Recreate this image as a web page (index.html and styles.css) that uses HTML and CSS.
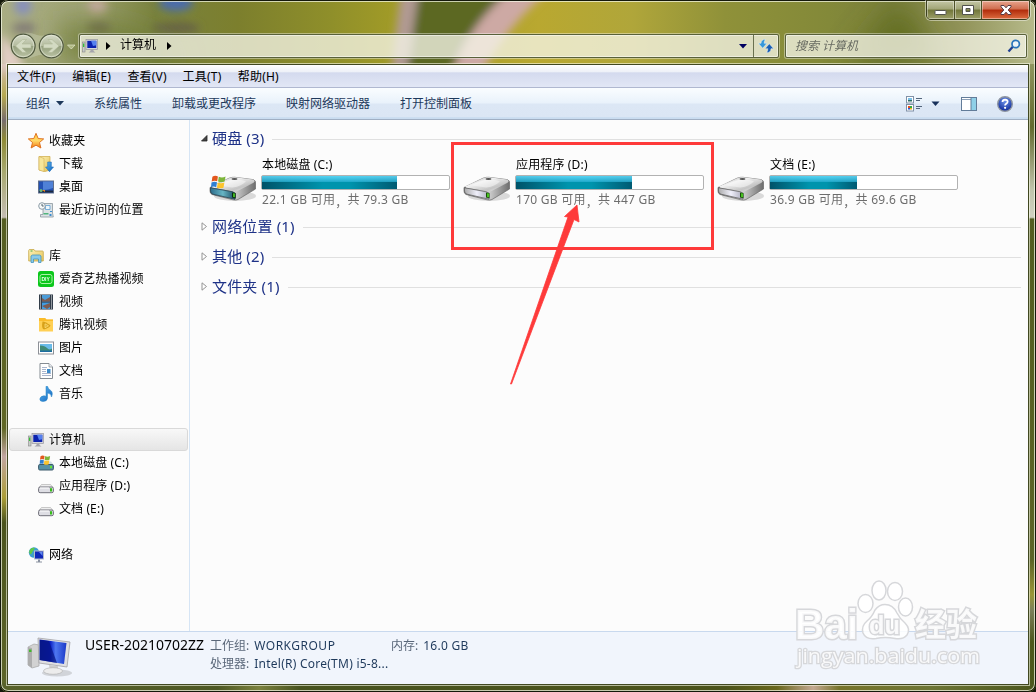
FILE: index.html
```html
<!DOCTYPE html>
<html lang="zh-CN">
<head>
<meta charset="utf-8">
<title>计算机</title>
<link rel="stylesheet" href="styles.css">
</head>
<body>
<svg class="defs" width="0" height="0">
  <defs>
    <linearGradient id="gMetal" x1="0" y1="0" x2="1" y2="1"><stop offset="0" stop-color="#9b9b9b"/><stop offset=".35" stop-color="#f2f2f2"/><stop offset=".7" stop-color="#c4c4c4"/><stop offset="1" stop-color="#f5f5f5"/></linearGradient>
    <linearGradient id="gSide" x1="0" y1="0" x2="1" y2="0"><stop offset="0" stop-color="#666"/><stop offset=".5" stop-color="#d9d9d9"/><stop offset="1" stop-color="#6d6d6d"/></linearGradient>
    <linearGradient id="gFront" x1="0" y1="0" x2="1" y2="0"><stop offset="0" stop-color="#aaa"/><stop offset=".5" stop-color="#efeffa"/><stop offset="1" stop-color="#aab"/></linearGradient>
    <linearGradient id="gTeal" x1="0" y1="0" x2="1" y2="0"><stop offset="0" stop-color="#2c6d8c"/><stop offset=".5" stop-color="#67b5c4"/><stop offset="1" stop-color="#1b4a63"/></linearGradient>
    <linearGradient id="gScreen" x1="0" y1="0" x2="1" y2="0"><stop offset="0" stop-color="#0a1e9c"/><stop offset=".4" stop-color="#0b20c4"/><stop offset=".6" stop-color="#4f78f0"/><stop offset="1" stop-color="#1a38c8"/></linearGradient>
    <linearGradient id="gStar" x1="0" y1="0" x2="0" y2="1"><stop offset="0" stop-color="#ffc53a"/><stop offset=".5" stop-color="#ffd968"/><stop offset="1" stop-color="#f27a14"/></linearGradient>
    <linearGradient id="gFolder" x1="0" y1="0" x2="1" y2="1"><stop offset="0" stop-color="#fdf3b8"/><stop offset="1" stop-color="#e5c257"/></linearGradient>
    <linearGradient id="gBlue" x1="0" y1="0" x2="1" y2="1"><stop offset="0" stop-color="#5fb8f2"/><stop offset="1" stop-color="#0f63bd"/></linearGradient>
    <linearGradient id="gNav" x1="0" y1="0" x2="0" y2="1"><stop offset="0" stop-color="#d5dac8"/><stop offset=".48" stop-color="#b4bc9f"/><stop offset=".52" stop-color="#95a07e"/><stop offset="1" stop-color="#bcc4a5"/></linearGradient>
    <radialGradient id="gHelp" cx=".5" cy=".3" r=".7"><stop offset="0" stop-color="#6f95ea"/><stop offset="1" stop-color="#0b2796"/></radialGradient>
    <symbol id="flag" viewBox="0 0 16 16">
      <path d="M1.5 2.5Q4 .6 7.4 2L6.6 7.2Q3.6 6 .7 7.5z" fill="#e2581e"/>
      <path d="M8.3 2.3Q11.500 4 15.500 2.200L14.500 7.500Q11 9.200 7.500 7.500z" fill="#7db53a"/>
      <path d="M.5 8.500Q3.500 7 6.400 8.200L5.500 13.500Q2.800 12.300 0 13.600z" fill="#2f7fd2"/>
      <path d="M7.300 8.500Q10.500 10 14.300 8.500L13.300 14Q10 15.500 6.300 14z" fill="#fcc42c"/>
    </symbol>
    <symbol id="drive" viewBox="0 0 48 32">
      <ellipse cx="26" cy="24" rx="21" ry="5" fill="#888" opacity=".3"/>
      <path d="M1 15.500L20 6.200Q23 5 26 5.300L44 7.600Q47 8.500 46.500 11V17L29 27.500Q27 28.500 24 27.800L3 22.500Q1 21.500 1 19z" fill="url(#gSide)" stroke="#696969" stroke-width=".7"/>
      <path d="M2 14.500L20 6.200Q23 5 26 5.300L44 7.600Q47 9 44.500 10.800L29 18.700Q27 19.700 23 18.800L3.500 15.900z" fill="url(#gMetal)"/>
      <path d="M9 13.500Q14 9 24 7.500Q34 7.500 37 9.500Q31 15 23 15.500z" fill="#f7f7f7" opacity=".55"/>
      <ellipse cx="25.500" cy="7" rx="3" ry=".9" fill="#555"/>
      <path d="M1.500 15.800L23.500 19.800Q26.500 20.500 26 23V27.200L4 22.200Q1.500 21.500 1.500 19z" fill="url(#gFront)" stroke="#666" stroke-width=".8"/>
      <path d="M23 20.500L26.500 21V26.200L23 25.400z" fill="#174f08"/><path d="M24.300 21.200L25.700 21.500V25.300L24.300 25z" fill="#5df22d"/>
    </symbol>
    <symbol id="sysdrive" viewBox="0 0 48 32">
      <use href="#drive" width="48" height="32"/>
      <path d="M1.500 15.800L23.500 19.800Q26.500 20.500 26 23V27.200L4 22.200Q1.500 21.500 1.500 19z" fill="url(#gTeal)" stroke="#2c4a59" stroke-width=".8"/>
      <path d="M23 20.500L26.500 21V26.200L23 25.400z" fill="#0a2d10"/><path d="M24.300 21.200L25.700 21.500V25.300L24.300 25z" fill="#5df22d"/>
      <use href="#flag" x="1.500" y="2.500" width="16" height="15"/>
    </symbol>
    <symbol id="minidrive" viewBox="0 0 16 16">
      <path d="M1 8.500L3.500 5.500H12.500L15 8.500z" fill="#eee" stroke="#aaa" stroke-width=".6"/>
      <rect x=".6" y="8" width="14.800" height="5.700" rx="1.500" fill="#dedee4" stroke="#71717b"/>
      <rect x="12" y="9.200" width="2.100" height="3.300" fill="#36bd19"/><path d="M2 9h9" stroke="#fff"/>
    </symbol>
    <symbol id="pc" viewBox="0 0 16 16">
      <rect x=".5" y="4" width="2.500" height="10" fill="#c7ccc9" stroke="#888" stroke-width=".6"/><rect x="1" y="5.500" width="1.300" height="3.500" fill="#35bd35"/>
      <rect x="4" y="1.500" width="11.500" height="10" fill="#d6d6db" stroke="#96969d" stroke-width=".7"/>
      <rect x="5.300" y="2.800" width="9" height="7.200" fill="#0b22ae"/><path d="M9 2.800h5.300v4.500L11 8z" fill="#5681ef"/>
      <path d="M8.500 11.500h3V13l2 1.500H6.500l2-1.500z" fill="#a5a5ad"/>
    </symbol>
  </defs>
</svg>

<div class="window">
  <svg class="glass" width="1036" height="692" viewBox="0 0 1036 692">
    <defs>
      <linearGradient id="wall" x1="0" y1="0" x2="1" y2="0">
        <stop offset="0" stop-color="#a9ad83"/><stop offset=".08" stop-color="#a1a577"/><stop offset=".15" stop-color="#79823e"/><stop offset=".23" stop-color="#7c7f2d"/><stop offset=".32" stop-color="#8f8f2a"/><stop offset=".38" stop-color="#a19b27"/><stop offset=".52" stop-color="#b9a830"/><stop offset=".61" stop-color="#b0a63a"/><stop offset=".7" stop-color="#8f9139"/><stop offset=".8" stop-color="#838939"/><stop offset=".86" stop-color="#7a803d"/><stop offset=".93" stop-color="#92945a"/><stop offset="1" stop-color="#b7bb8c"/>
      </linearGradient>
      <linearGradient id="sideL" x1="0" y1="0" x2="0" y2="1"><stop offset="0" stop-color="#d3bcb2"/><stop offset=".05" stop-color="#b6aa50"/><stop offset=".09" stop-color="#776d6c"/><stop offset=".12" stop-color="#8e8a35"/><stop offset=".17" stop-color="#a6a86d"/><stop offset=".244" stop-color="#c4bdb2"/><stop offset=".247" stop-color="#555e22"/><stop offset=".58" stop-color="#606725"/><stop offset=".625" stop-color="#c2a6a0"/><stop offset=".69" stop-color="#ab9e37"/><stop offset=".73" stop-color="#4b541d"/><stop offset="1" stop-color="#5e662a"/></linearGradient>
      <linearGradient id="sideR" x1="0" y1="0" x2="0" y2="1"><stop offset="0" stop-color="#8f965f"/><stop offset=".1" stop-color="#626a2d"/><stop offset=".2" stop-color="#c0c4ab"/><stop offset=".244" stop-color="#d0d2c1"/><stop offset=".247" stop-color="#525d20"/><stop offset=".79" stop-color="#5c6426"/><stop offset=".845" stop-color="#9a9637"/><stop offset=".87" stop-color="#7c7f5a"/><stop offset=".92" stop-color="#4c581c"/><stop offset="1" stop-color="#4c581c"/></linearGradient>
      <linearGradient id="foot" x1="0" y1="0" x2="1" y2="0"><stop offset="0" stop-color="#59622b"/><stop offset=".21" stop-color="#4e5824"/><stop offset=".25" stop-color="#7b813e"/><stop offset=".29" stop-color="#48531f"/><stop offset=".7" stop-color="#4c531b"/><stop offset=".75" stop-color="#69671c"/><stop offset=".785" stop-color="#c3a891"/><stop offset=".81" stop-color="#77742b"/><stop offset=".9" stop-color="#6d7535"/><stop offset="1" stop-color="#4b561d"/></linearGradient>
      <filter id="soft" x="-20%" y="-20%" width="140%" height="140%"><feGaussianBlur stdDeviation="4"/></filter>
      <filter id="soft2" x="-50%" y="-50%" width="200%" height="200%"><feGaussianBlur stdDeviation="14"/></filter>
    </defs>
    <rect width="1036" height="66" fill="url(#wall)"/>
    <rect y="64" width="9" height="628" fill="url(#sideL)"/>
    <rect x="1027" y="64" width="9" height="628" fill="url(#sideR)"/>
    <rect y="683" width="1036" height="9" fill="url(#foot)"/>
    <g filter="url(#soft)">
      <path d="M417-10H512L448 72H402z" fill="#5b6820"/>
      <path d="M401-10H419L407 72H391z" fill="#b19a93"/>
      <path d="M512-10H550Q512 20 482 72H452Q472 20 512-10z" fill="#cda9a4"/>
      <ellipse cx="23" cy="6" rx="9" ry="9" fill="#8790bc"/><ellipse cx="97" cy="6" rx="10" ry="8" fill="#c5aca0"/><ellipse cx="176" cy="3" rx="17" ry="8" fill="#496cae"/>
      <ellipse cx="24" cy="28" rx="12" ry="5" fill="#7e7776"/><ellipse cx="99" cy="28" rx="12" ry="5" fill="#75695d"/><ellipse cx="176" cy="28" rx="24" ry="5" fill="#66604a"/>
      <path d="M0 33Q22 55 24 70H0z" fill="#e1cdc4"/>
    </g>
    <g filter="url(#soft2)"><path d="M900 0L850 60H940z" fill="#646e24"/><path d="M60 20Q160 20 180 65H60z" fill="#69762d" opacity=".7"/></g>
  </svg>

  <div class="caption">
    <div class="caption-buttons">
      <span class="cap min"><svg width="14" height="8" viewBox="0 0 14 8"><rect x="1" y="2.500" width="11" height="4" rx=".8" fill="#fff" stroke="#52534d"/></svg></span>
      <span class="cap max"><svg width="14" height="12" viewBox="0 0 14 12"><path fill-rule="evenodd" d="M1.500 1.500h11v9h-11zM5 4.500v3h4v-3z" fill="#fff" stroke="#52534d"/></svg></span>
      <span class="cap close"><svg width="14" height="12" viewBox="0 0 14 12"><path d="M2 1.500h3l2 2.300 2-2.300h3v1.300L9.200 6l2.800 3.200v1.300H9L7 8.200 5 10.500H2V9.200L4.800 6 2 2.800z" fill="#fff" stroke="#553c45"/></svg></span>
    </div>
  </div>

  <div class="navbar">
    <svg class="navbuttons" width="68" height="30" viewBox="0 0 68 30">
      <path d="M14 2Q21 1 28 4Q34 6 40 2.500Q55 0 55 15Q53 30 41 28Q34 22 27 25Q14 31 2 22Q-2 7 14 2z" fill="#c8ceb3" opacity=".45"/>
      <g stroke="#4f583e" stroke-width="1.200" fill="url(#gNav)"><circle cx="14.200" cy="15" r="11.900"/><circle cx="42.300" cy="15" r="11.900"/></g>
      <g fill="none" stroke="#edf0e2" opacity=".6"><circle cx="14.200" cy="15" r="10.700"/><circle cx="42.300" cy="15" r="10.700"/></g>
      <path d="M6.500 15l7-6.500h4l-4.500 4.500h9v4h-9l4.500 4.500h-4z" fill="#d3dac2" stroke="#b0b898" stroke-width=".6"/>
      <path d="M50 15l-7-6.500h-4L43.500 13h-9v4h9L39 21.500h4z" fill="#d3dac2" stroke="#b0b898" stroke-width=".6"/>
      <path d="M58.500 14h7.500l-3.700 4z" fill="#aeb780" stroke="#e2e7cc" stroke-width=".7"/>
    </svg>
    <div class="address">
      <svg class="i16" viewBox="0 0 16 16"><use href="#pc"/></svg>
      <svg class="crumb" width="5" height="8" viewBox="0 0 5 8"><path d="M0 0l4.500 4L0 8z"/></svg>
      <span class="place">计算机</span>
      <svg class="crumb last" width="5" height="8" viewBox="0 0 5 8"><path d="M0 0l4.500 4L0 8z"/></svg>
      <svg class="drop" width="8" height="5" viewBox="0 0 8 5"><path d="M0 0h8L4 4.500z" fill="#000060"/></svg>
      <span class="refresh"><svg width="16" height="14" viewBox="0 0 16 14"><path d="M7.500.3Q3 .3 3 4.300H.3L4.700 9.300 9 4.300H6.200Q6.200 2 7.500.3z" fill="#3698da" stroke="#f2f7f7" stroke-width=".5"/><path d="M8.500 13.700Q13 13.700 13 9.700h2.700L11.300 4.700 7 9.700h2.800Q9.800 12 8.500 13.700z" fill="#1a5fb4" stroke="#f2f7f7" stroke-width=".5"/></svg></span>
    </div>
    <div class="search"><span class="hint">搜索 计算机</span>
      <svg width="14" height="14" viewBox="0 0 14 14"><path d="M1.500 12.500L5.800 7.800" stroke="#203f91" stroke-width="2.300"/><circle cx="8.700" cy="5" r="3.700" fill="#edf4f7" stroke="#2874ba" stroke-width="1.700"/></svg>
    </div>
  </div>

  <div class="client">
    <div class="menubar"><span>文件(F)</span><span>编辑(E)</span><span>查看(V)</span><span>工具(T)</span><span>帮助(H)</span></div>
    <div class="toolbar">
      <span class="org">组织<svg width="8" height="5" viewBox="0 0 8 5"><path d="M0 0h8L4 4.500z" fill="#1e395b"/></svg></span><span>系统属性</span><span>卸载或更改程序</span><span>映射网络驱动器</span><span>打开控制面板</span>
      <div class="tools">
        <svg width="34" height="16" viewBox="0 0 34 16"><g fill="#fff" stroke="#8192a8"><rect x=".5" y=".5" width="7" height="6.500"/><rect x=".5" y="8.500" width="7" height="6.500"/></g><path d="M2 2h4v2H2z" fill="#7bc0e6"/><path d="M2 4h4v1.500H2z" fill="#2b6c67"/><path d="M2 10h2v2H2z" fill="#e64c1c"/><path d="M4 10h2v2H4z" fill="#36a840"/><path d="M2 12h2v1.500H2z" fill="#2458d3"/><path d="M4 12h2v1.500H4z" fill="#efb221"/><path d="M10 2.500h6M10 4.500h4M10 10.500h6M10 12.500h4" stroke="#53667c"/><path d="M25.500 5.500h8l-4 4.500z" fill="#17305a"/></svg>
        <svg class="pane" width="16" height="14" viewBox="0 0 16 14"><rect x=".5" y=".5" width="15" height="13" fill="#fff" stroke="#627c99"/><rect x="10" y="1" width="5" height="12" fill="#8fd0e8"/><path d="M1 2.500h9" stroke="#8ba0b8"/><path d="M10 1v12" stroke="#627c99"/></svg>
        <svg width="16" height="16" viewBox="0 0 16 16"><circle cx="8" cy="8" r="7.300" fill="url(#gHelp)" stroke="#8d94a0" stroke-width="1.400"/><path d="M5.500 6Q5.600 3.600 8.100 3.600Q10.700 3.700 10.600 5.800Q10.500 7 9.200 7.800Q8.100 8.500 8.100 9.500" fill="none" stroke="#fff" stroke-width="1.800"/><circle cx="8.100" cy="11.800" r="1.100" fill="#fff"/></svg>
      </div>
    </div>

    <div class="body">
      <div class="sidebar">
        <div class="section">
          <div class="row top"><svg class="i16" viewBox="0 0 16 16"><path d="M8 .3l2.200 5.200 5.500.4-4.200 3.600 1.400 5.500L8 12.200 3.100 15l1.400-5.500L.3 5.900l5.500-.4z" fill="url(#gStar)" stroke="#dc6b18" stroke-width=".9"/></svg>收藏夹</div>
          <div class="row"><svg class="i16" viewBox="0 0 16 16"><path d="M1 .5h11V14l-5 1.500L1 14z" fill="url(#gFolder)" stroke="#cda943" stroke-width=".7"/><path d="M1 .5l5 2v13L1 14z" fill="#f7e69a" stroke="#c9a54a" stroke-width=".5"/><path d="M9.700 6h3.600v5h2.200l-4 4.700-4-4.700h2.200z" fill="url(#gBlue)" stroke="#1e6db8" stroke-width=".6"/></svg>下载</div>
          <div class="row"><svg class="i16" viewBox="0 0 16 16"><rect x=".5" y="2" width="15" height="12" fill="#2452b4" stroke="#606f8b"/><path d="M5 2.500h10v6.500q-5 2-10 2z" fill="#679be9" opacity=".65"/><path d="M1 11.500h14v2H1z" fill="#1b2940"/><circle cx="3" cy="11.500" r="1.500" fill="#66bd7a"/><path d="M4 11h3v2z" fill="#e98524"/></svg>桌面</div>
          <div class="row"><svg class="i16" viewBox="0 0 16 16"><path d="M5 1.500h9.500V11l.8 4H2.500v-2.500H5z" fill="#dde2e5" stroke="#8c989f" stroke-width=".8"/><path d="M7.500 3.500H12v4H7.500z" fill="#eef6fb" stroke="#5a9fd4" stroke-width=".8"/><path d="M5.500 11h5v1.500h-5z" fill="#51b57c"/><path d="M11.500 12h2v2h-2zM12 9h2v1h-2z" fill="#3c8dd0"/><circle cx="4" cy="4" r="3.300" fill="#f7fafb" stroke="#8b9ba6"/><path d="M4 2v2h1.700" stroke="#52646f" fill="none"/></svg>最近访问的位置</div>
        </div>
        <div class="section">
          <div class="row top"><svg class="i16" viewBox="0 0 16 16"><path d="M.7 2.500Q.7 1.500 2 1.500h4l1 1.500h7.500q.8 0 .8 1v9H.7z" fill="url(#gFolder)" stroke="#c7a849" stroke-width=".8"/><path d="M3 14.500V8l1.500-1h7L13 8v6.500h-2.500V11h-5v3.500z" fill="#8acae9" stroke="#4295bf" stroke-width=".8"/><path d="M2.500 3h2" stroke="#47a64b"/></svg>库</div>
          <div class="row"><svg class="i16" viewBox="0 0 16 16"><rect width="16" height="16" rx="2.500" fill="#0bc71b"/><rect x="2" y="3.500" width="12" height="9" rx="2" fill="none" stroke="#a9f3a5"/><text class="diy" x="3.500" y="10">DIY</text></svg>爱奇艺热播视频</div>
          <div class="row"><svg class="i16" viewBox="0 0 16 16"><rect x="1" y=".5" width="14" height="15" fill="#273340"/><rect x="4" y="1" width="8" height="6.500" fill="#4c9cd8"/><rect x="4" y="8.500" width="8" height="6.500" fill="#429de1"/><path d="M4 4l3 2 5-3v4.500H4zM4 12l8-3v4l-3 2z" fill="#7d5b50"/><path d="M2.500 1.500v13M13.500 1.500v13" stroke="#fff" stroke-width="1.200" stroke-dasharray="1 1"/></svg>视频</div>
          <div class="row"><svg class="i16" viewBox="0 0 16 16"><path d="M1 1h6l1.500 1.500H15V14.500H1z" fill="#ffd055"/><path d="M1 1h6l1.500 1.500H15V4H1z" fill="#fbbc2a"/><path d="M4.500 4.500Q5 4 8 5.500Q12.500 8 12.500 8.500Q12 10.500 6 12.500Q3.200 12 4.500 4.500z" fill="#d8a11a"/><path d="M7 6.800l3.500 2-3.500 2z" fill="#e4b22c" stroke="#ffe183" stroke-width=".7"/></svg>腾讯视频</div>
          <div class="row"><svg class="i16" viewBox="0 0 16 16"><rect x=".5" y="2" width="15" height="12" fill="#fff" stroke="#8d9097"/><path d="M2 4h12v8H2z" fill="#6abbe9"/><path d="M2 5.500q5 0 7 2.500t5 .5v3.500H2z" fill="#418b76"/><path d="M2 10.500h12V12H2z" fill="#1c6ca0"/></svg>图片</div>
          <div class="row"><svg class="i16" viewBox="0 0 16 16"><path d="M2 .5h9L14.500 4v11.500H2z" fill="#fff" stroke="#858c93"/><path d="M11 .5V4h3.500" fill="#e9edf2" stroke="#858c93" stroke-width=".7"/><path d="M4 4.500h5M4 6.500h4M4 8.500h4M4 10.500h9M4 12.500h9" stroke="#a9b5cd"/><rect x="9" y="6" width="3.500" height="4" fill="#3d8bc9"/></svg>文档</div>
          <div class="row"><svg class="i16" viewBox="0 0 16 16"><path d="M8 .3h1.500q.5 2.500 3 4 3 2 1 6.700 0-3.500-4-4v5.200q-.5 3.300-4.500 3.300-3.200 0-3.200-2.500 .5-2.900 4.200-3.200 1 0 2 .5z" fill="url(#gBlue)" stroke="#2381c3" stroke-width=".5"/></svg>音乐</div>
        </div>
        <div class="section">
          <div class="row top selected"><svg class="i16" viewBox="0 0 16 16"><use href="#pc"/></svg>计算机</div>
          <div class="row"><svg class="i16" viewBox="0 0 16 16"><path d="M1 9l2.500-2.500H13L15 9z" fill="#cfdde3"/><rect x=".6" y="9.500" width="14.800" height="5.500" rx="1.200" fill="#5791a6" stroke="#3b596a"/><rect x="12" y="10.800" width="2" height="2.500" fill="#63e435"/><use href="#flag" x="1.500" y="-.5" width="11" height="11"/></svg>本地磁盘 (C:)</div>
          <div class="row"><svg class="i16 low" viewBox="0 0 16 16"><use href="#minidrive"/></svg>应用程序 (D:)</div>
          <div class="row"><svg class="i16 low" viewBox="0 0 16 16"><use href="#minidrive"/></svg>文档 (E:)</div>
        </div>
        <div class="section">
          <div class="row top"><svg class="i16" viewBox="0 0 16 16"><circle cx="6" cy="5.500" r="5.200" fill="#3e9ed0"/><path d="M2 2.500Q4 0 7 1L5 4 3 7.500Q0 6 2 2.500zM5 8l3-1v3z" fill="#60ca46"/><rect x="6.500" y="4" width="9" height="8" fill="#1027b8" stroke="#b5bccb"/><path d="M11 5h3.500v4z" fill="#6188ed"/><path d="M10 12.500h2v2h2v1H8v-1h2z" fill="#8991a0"/></svg>网络</div>
        </div>
      </div>

      <div class="main">
        <div class="group"><svg width="7" height="7" viewBox="0 0 7 7"><path d="M6 .5V6H.5z" fill="#444" stroke="#222" stroke-width=".8"/></svg><span>硬盘 (3)</span><i></i></div>
        <div class="tiles">
          <div class="tile"><svg class="drive" viewBox="0 0 48 32"><use href="#sysdrive"/></svg><div class="info"><span class="name">本地磁盘 (C:)</span><div class="bar"><div class="used" style="width:72.300%"></div></div><span class="free">22.1 GB 可用<span class="comma">，</span>共 79.3 GB</span></div></div>
          <div class="tile"><svg class="drive" viewBox="0 0 48 32"><use href="#drive"/></svg><div class="info"><span class="name">应用程序 (D:)</span><div class="bar"><div class="used" style="width:62%"></div></div><span class="free">170 GB 可用<span class="comma">，</span>共 447 GB</span></div></div>
          <div class="tile"><svg class="drive" viewBox="0 0 48 32"><use href="#drive"/></svg><div class="info"><span class="name">文档 (E:)</span><div class="bar"><div class="used" style="width:46.600%"></div></div><span class="free">36.9 GB 可用<span class="comma">，</span>共 69.6 GB</span></div></div>
        </div>
        <div class="group"><svg width="7" height="9" viewBox="0 0 7 9"><path d="M1 .8l4.500 3.700L1 8.200z" fill="#fff" stroke="#949494"/></svg><span>网络位置 (1)</span><i></i></div>
        <div class="group"><svg width="7" height="9" viewBox="0 0 7 9"><path d="M1 .8l4.500 3.700L1 8.200z" fill="#fff" stroke="#949494"/></svg><span>其他 (2)</span><i></i></div>
        <div class="group"><svg width="7" height="9" viewBox="0 0 7 9"><path d="M1 .8l4.500 3.700L1 8.200z" fill="#fff" stroke="#949494"/></svg><span>文件夹 (1)</span><i></i></div>
      </div>
    </div>

    <div class="details">
      <svg class="bigpc" width="48" height="42" viewBox="0 0 48 42">
        <ellipse cx="30" cy="36" rx="15" ry="3.500" fill="#888" opacity=".3"/>
        <path d="M1 10l6-3 5 1v21l-7 2-4-3z" fill="#d2d2d2" stroke="#a5a5a5" stroke-width=".7"/><path d="M1 10l4 1v20l-4-3z" fill="#adadad"/><rect x="2" y="12.500" width="2.500" height="2.500" fill="#41b92c"/>
        <path d="M11 1l32 4-3 25-28-4z" fill="#dfdfe2" stroke="#a2a2a6" stroke-width=".8"/><path d="M12.500 2.500l27 3.500-2.500 21-24.500-4z" fill="url(#gScreen)"/><path d="M13 3l9 1 8 22-17-3z" fill="#061480" opacity=".7"/>
        <path d="M22 28l9 1v4h-8z" fill="#ccc"/><ellipse cx="26" cy="34" rx="9.500" ry="3.300" fill="#ececec" stroke="#b5b5b5" stroke-width=".7"/>
      </svg>
      <div class="host">USER-20210702ZZ</div>
      <div class="facts">
        <div><span class="key">工作组:</span><span class="val wg">WORKGROUP</span></div>
        <div><span class="key">处理器:</span><span class="val cpu">Intel(R) Core(TM) i5-8...</span></div>
      </div>
      <div class="facts mem"><div><span class="key">内存:</span><span class="val">16.0 GB</span></div></div>
    </div>
  </div>

  <svg class="annotation" width="1036" height="692" viewBox="0 0 1036 692">
    <rect x="452.500" y="143.500" width="260" height="105" fill="none" stroke="#fe3a3a" stroke-width="3"/>
    <path d="M510.500 384L568 217L564.500 216.500L577 205L579 222L574 219.500L511.500 384z" fill="#fe3a3a" stroke="#fe3a3a" stroke-width=".8"/>
  </svg>
  <svg class="watermark" width="210" height="110" viewBox="780 570 210 110">
    <g fill="#fff" fill-opacity=".85" stroke="#d6d7da" stroke-width="1.500">
      <ellipse cx="865.500" cy="603.500" rx="7.500" ry="9"/><ellipse cx="879" cy="590.500" rx="7" ry="9.500"/><ellipse cx="895" cy="591.500" rx="7.500" ry="9"/><ellipse cx="905.500" cy="607" rx="7" ry="9"/>
      <path d="M885 604.500Q893 604.500 897 613Q900 619 905 623Q911 629 907 635Q903 640 895 638.500Q885 636.500 876 638.500Q866 640 863 633Q861 626 867 621Q872 617 875 610Q879 604.500 885 604.500z"/>
      <text class="wm bold" x="795" y="638.500" font-size="43" textLength="63" lengthAdjust="spacingAndGlyphs" stroke-width="3">Bai</text>
      <text class="wm bold" x="869" y="634" font-size="26" textLength="31" lengthAdjust="spacingAndGlyphs" stroke-width="3">du</text>
      <text class="wm cjk" x="915" y="636" font-size="32" textLength="62" lengthAdjust="spacingAndGlyphs" stroke-width="3">经验</text>
      <text class="wm url" x="797" y="663" font-size="20" textLength="183" lengthAdjust="spacingAndGlyphs" stroke-width="2.500">jingyan.baidu.com</text>
    </g>
  </svg>
</div>
</body>
</html>
```
FILE: styles.css
```css
* { box-sizing: border-box; }
body {
  margin: 0;
  width: 1036px;
  height: 692px;
  overflow: hidden;
  background: #14180a;
  font: 12px/16px "Noto Sans", "Noto Sans CJK SC", sans-serif;
  color: #000;
}
svg { display: block; flex: none; }
.defs { position: absolute; }
.window {
  position: relative;
  width: 1036px;
  height: 692px;
  display: flex;
  flex-direction: column;
  padding: 0 7px 7px;
  border-radius: 8px;
  overflow: hidden;
  isolation: isolate;
}
.window::after {
  content: "";
  position: absolute;
  inset: 0;
  border: 1px solid #15190b;
  border-radius: 8px;
  box-shadow: inset 0 0 0 1px rgba(250, 252, 235, .7);
  pointer-events: none;
  z-index: -1;
}
.glass { position: absolute; inset: 0; z-index: -2; }

.caption { height: 31px; display: flex; justify-content: flex-end; }
.caption-buttons {
  display: flex;
  width: 104px;
  height: 20px;
  margin-right: -1px;
  border: 1px solid #3c401f;
  border-radius: 0 0 5px 5px;
  box-shadow: 0 0 0 1px rgba(255, 255, 255, .45);
  overflow: hidden;
}
.cap {
  display: flex;
  align-items: center;
  justify-content: center;
  box-shadow: inset 0 0 0 1px rgba(255, 255, 255, .4);
  background: linear-gradient(#c4c7a5 0, #a1a577 45%, #717639 50%, #9da06a 100%);
}
.min { width: 28px; border-right: 1px solid #4d5128; }
.max { width: 27px; border-right: 1px solid #4d5128; }
.min svg { margin-top: 4px; }
.close { flex: 1; background: linear-gradient(#e7a48d 0, #cf6d4e 45%, #b12b0b 50%, #dd6d40 100%); }

.navbar { height: 33px; display: flex; align-items: flex-start; padding: 0 2px 0 2px; }
.navbuttons { margin-right: 2px; }
.address, .search {
  display: flex;
  align-items: center;
  height: 24px;
  margin-top: 3px;
  border: 1px solid #59613a;
  border-radius: 2px;
  background: rgba(246, 246, 233, .77);
  box-shadow: 0 0 0 1px rgba(255, 255, 255, .4), inset 0 0 0 1px rgba(255, 255, 255, .5);
}
.address { width: 700px; padding-left: 2px; }
.crumb { margin: 0 9px 0 8px; }
.crumb.last { margin-left: 11px; }
.place { margin-top: -2px; }
.drop { margin-left: auto; margin-right: 6px; }
.refresh {
  display: flex;
  align-items: center;
  justify-content: center;
  width: 25px;
  height: 22px;
  border-left: 1px solid #6a7150;
}
.search { width: 242px; margin-left: 6px; justify-content: space-between; padding: 0 5px 0 9px; }
.hint { font-style: italic; color: #686b62; }

.client {
  height: 621px;
  display: flex;
  flex-direction: column;
  border: 1px solid #414821;
  background: #fcfcfc;
  box-shadow: 0 0 0 1px rgba(250, 252, 235, .6);
}
.menubar {
  height: 23px;
  flex: none;
  display: grid;
  grid-template-columns: repeat(5, 55.2px);
  padding: 4px 9px 0;
  letter-spacing: .2px;
  background: linear-gradient(#fff 0, #eef1f8 30%, #d4daee 36%, #e2e7f5 100%);
  border-bottom: 1px solid #b0b8d0;
}
.toolbar {
  height: 32px;
  flex: none;
  display: flex;
  align-items: center;
  gap: 30px;
  padding: 0 15px 0 18px;
  color: #1e395b;
  background: linear-gradient(#fafdff 0, #e9f2fb 48%, #dce7f5 52%, #dbe6f4 92%, #c9dcf0 96%);
  border-bottom: 1px solid #a0afc3;
}
.org { display: flex; align-items: center; gap: 6px; }
.tools { margin-left: auto; display: flex; align-items: center; gap: 20px; }
.pane { margin-left: 1px; }

.body { flex: 1; display: flex; min-height: 0; }
.sidebar { width: 182px; flex: none; padding-top: 9px; border-right: 1px solid #d6e5f5; letter-spacing: .1px; }
.section { margin-bottom: 23px; }
.row {
  display: flex;
  align-items: center;
  gap: 5px;
  height: 23px;
  padding-left: 30px;
}
.row.top { padding-left: 20px; }
.selected {
  margin: 0 1px 0 1px;
  border: 1px solid #d9d9d9;
  border-radius: 3px;
  background: linear-gradient(#f8f8f8, #e5e5e5);
}
.row.selected { padding-left: 18px; }
.i16 { width: 16px; height: 16px; }
.low { margin-top: 3px; }
.diy { font: bold 5px "Liberation Sans", sans-serif; fill: #eaffea; letter-spacing: 0; }

.main { flex: 1; padding: 8px 7px 0 11px; }
.group {
  display: flex;
  align-items: center;
  height: 20px;
  margin-bottom: 10px;
  gap: 4px;
  font-size: 15px;
  line-height: 20px;
  color: #1e3287;
}
.group span { white-space: nowrap; letter-spacing: .15px; }
.group i { flex: 1; height: 1px; margin: 2px 0 0 4px; background: #e0e0e0; }
.tiles { display: grid; grid-template-columns: repeat(3, 254px); height: 68px; margin-top: -10px; margin-left: 8px; }
.tile { display: flex; padding-top: 9px; }
.drive { width: 48px; height: 32px; margin-top: 15px; }
.info { width: 190px; margin-left: 4px; display: flex; flex-direction: column; }
.name { height: 18px; padding-left: 1px; white-space: nowrap; letter-spacing: .15px; }
.bar {
  height: 15px;
  width: 189px;
  border: 1px solid #b2b2b2;
  border-radius: 2px;
  background: #fff;
}
.used {
  height: 13px;
  background:
    linear-gradient(rgba(100, 222, 255, .85) 0, rgba(48, 180, 215, .8) 42%, transparent 48%),
    linear-gradient(90deg, #005268, #0094ad 45%, #0094ad 65%, #005a72);
}
.free { height: 16px; padding-left: 1px; margin-top: 2px; color: #6d6d6d; white-space: nowrap; letter-spacing: .27px; }
.comma { font-family: "Noto Sans CJK TC", sans-serif; line-height: 1; vertical-align: -3px; }

.details {
  flex: none;
  height: 53px;
  display: flex;
  padding: 5px 0 0 19px;
  background: #f1f5fc;
  border-top: 1px solid #c9d9ee;
}
.host { width: 125px; margin-left: 10px; font-size: 14px; line-height: 16px; white-space: nowrap; }
.facts { line-height: 18px; width: 181px; color: #1e395b; white-space: nowrap; }
.facts > div { display: flex; gap: 5px; }
.key { color: #5a6779; }
.val { letter-spacing: .25px; }
.wg { letter-spacing: .5px; }

.annotation { position: absolute; inset: 0; z-index: 2; }
.watermark { position: absolute; left: 780px; top: 570px; z-index: 3; }
.wm { paint-order: stroke; }
.bold { font-family: "Liberation Sans", sans-serif; font-weight: bold; }
.cjk { font-family: "Noto Sans CJK SC", sans-serif; font-weight: bold; }
.url { font-family: "Open Sans", sans-serif; }
```
